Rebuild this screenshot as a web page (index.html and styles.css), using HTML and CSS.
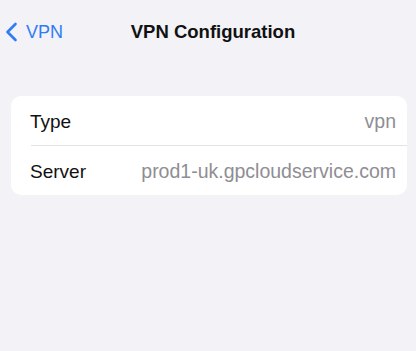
FILE: index.html
```html
<!DOCTYPE html>
<html lang="en">
<head>
    <meta charset="UTF-8">
    <meta name="viewport" content="width=device-width, initial-scale=1.0">
    <title>VPN Configuration</title>
    <link rel="stylesheet" href="styles.css">
</head>
<body>

    <div class="nav-bar">
        <a class="back-link" href="#">
            <svg class="chevron" width="13" height="20" viewBox="0 0 13 20">
                <path d="M10.5 2 L2.5 10 L10.5 18" fill="none" stroke="currentColor" stroke-width="2.6" stroke-linecap="round" stroke-linejoin="round"/>
            </svg>
            <span>VPN</span>
        </a>
        <div class="nav-title">VPN Configuration</div>
    </div>

    <div class="group">
        <div class="row">
            <div class="row-label">Type</div>
            <div class="row-value">vpn</div>
        </div>
        <div class="row">
            <div class="row-label">Server</div>
            <div class="row-value">prod1-uk.gpcloudservice.com</div>
        </div>
    </div>

</body>
</html>
```

FILE: styles.css
```css
body {
    font-family: "Helvetica Neue", "Liberation Sans", Arial, sans-serif;
    margin: 0;
    padding: 0;
    background-color: #f2f2f7;
    color: #111;
}

.nav-bar {
    position: relative;
    height: 64px;
    display: flex;
    align-items: center;
}

.back-link {
    display: flex;
    align-items: center;
    gap: 8px;
    padding-left: 5px;
    color: #2f7cf6;
    text-decoration: none;
    font-size: 18px;
    z-index: 1;
}

.chevron {
    display: block;
}

.nav-title {
    position: absolute;
    left: 0;
    right: 0;
    text-align: center;
    font-size: 18.5px;
    font-weight: bold;
    padding-left: 10px;
}

.group {
    margin: 32px 9px 0 11px;
    background-color: #fff;
    border-radius: 10px;
}

.row {
    display: flex;
    justify-content: space-between;
    align-items: center;
    height: 47px;
    padding-top: 2px;
    margin-left: 20px;
    padding-right: 11px;
    font-size: 19px;
}

.row + .row {
    border-top: 1px solid #e3e3e7;
}

.row-label {
    margin-left: -1px;
}

.row-value {
    color: #8e8e93;
    font-size: 19.5px;
}
```
